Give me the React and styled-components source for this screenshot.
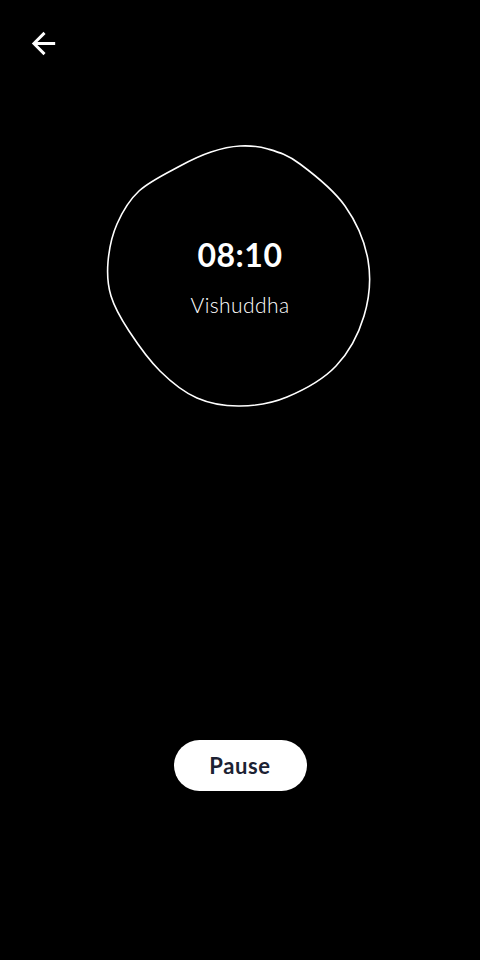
import React from "react";
import styled, { createGlobalStyle } from "styled-components";
import { MdArrowBack } from "react-icons/md";

const Global = createGlobalStyle`
  html, body { margin: 0; padding: 0; background: #000; }
  body { font-family: Lato, "Noto Sans", sans-serif; }
`;

const Screen = styled.div`
  width: 480px;
  height: 960px;
  background: #000;
  display: flex;
  flex-direction: column;
  align-items: center;
  box-sizing: border-box;
`;

const Header = styled.div`
  align-self: stretch;
  height: 86px;
  padding: 26px 0 0 26px;
  box-sizing: border-box;
`;

const BackButton = styled.button`
  background: none;
  border: none;
  padding: 0;
  width: 35px;
  height: 35px;
  color: #fff;
  display: flex;
  cursor: pointer;
`;

const BlobWrap = styled.div`
  position: relative;
  width: 280px;
  height: 280px;
  margin-top: 50px;
  display: flex;
  flex-direction: column;
  align-items: center;
  justify-content: center;
`;

const BlobSvg = styled.svg`
  position: absolute;
  inset: 0;
`;

const Time = styled.div`
  position: relative;
  color: #fff;
  font-size: 32px;
  font-weight: 700;
  line-height: 40px;
  letter-spacing: 0.5px;
`;

const Chakra = styled.div`
  position: relative;
  color: #fff;
  font-size: 21px;
  font-weight: 300;
  line-height: 24px;
  letter-spacing: 0.4px;
  margin-top: 18px;
`;

const PauseButton = styled.button`
  margin-top: 324px;
  width: 133px;
  height: 51px;
  border: none;
  border-radius: 26px;
  background: #fff;
  color: #1c2233;
  font-family: Lato, "Noto Sans", sans-serif;
  font-size: 22px;
  font-weight: 700;
  letter-spacing: 0.6px;
  cursor: pointer;
`;

const pts = [
  [240, 146], [268, 149], [300, 164], [345, 206], [368, 260], [364, 316],
  [336, 366], [287, 397], [240, 406], [197, 398], [160, 371], [129, 331],
  [111, 296], [108, 262], [117, 224], [139, 191], [180, 166], [211, 152],
];

function blobPath(p) {
  const n = p.length;
  let d = `M${p[0][0]},${p[0][1]}`;
  for (let i = 0; i < n; i++) {
    const p0 = p[(i - 1 + n) % n], p1 = p[i], p2 = p[(i + 1) % n], p3 = p[(i + 2) % n];
    const c1 = [p1[0] + (p2[0] - p0[0]) / 6, p1[1] + (p2[1] - p0[1]) / 6];
    const c2 = [p2[0] - (p3[0] - p1[0]) / 6, p2[1] - (p3[1] - p1[1]) / 6];
    d += ` C${c1[0].toFixed(1)},${c1[1].toFixed(1)} ${c2[0].toFixed(1)},${c2[1].toFixed(1)} ${p2[0]},${p2[1]}`;
  }
  return d + " Z";
}

export default function App() {
  return (
    <>
      <Global />
      <Screen>
        <Header>
          <BackButton aria-label="Back">
            <MdArrowBack size={35} />
          </BackButton>
        </Header>
        <BlobWrap>
          <BlobSvg width="280" height="280" viewBox="100 136 280 280">
            <path d={blobPath(pts)} fill="none" stroke="#fff" strokeWidth="1.6" />
          </BlobSvg>
          <Time>08:10</Time>
          <Chakra>Vishuddha</Chakra>
        </BlobWrap>
        <PauseButton>Pause</PauseButton>
      </Screen>
    </>
  );
}
